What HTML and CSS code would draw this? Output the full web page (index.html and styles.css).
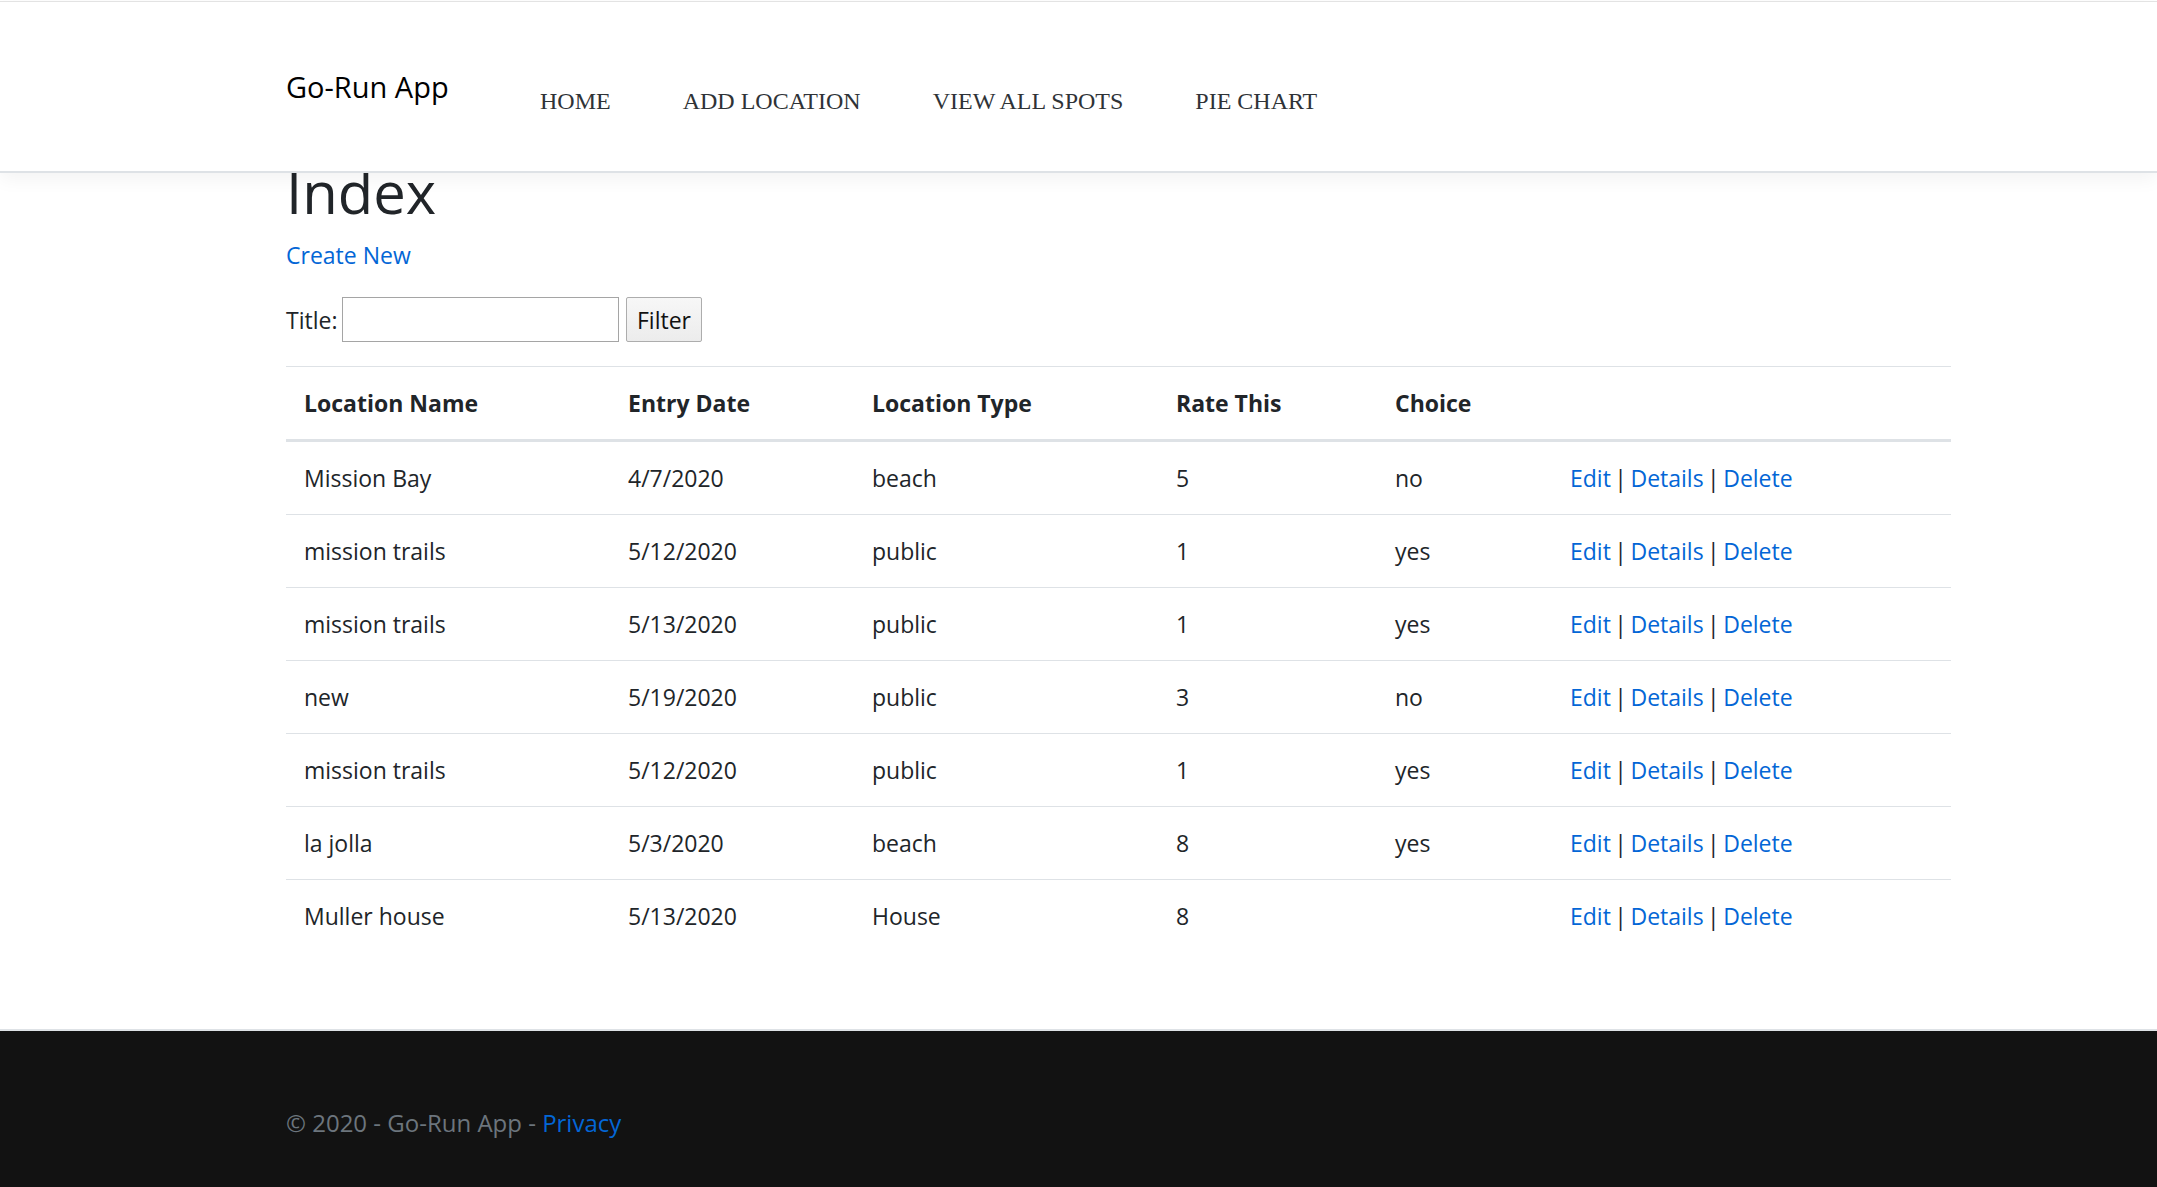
FILE: index.html
```html
<!DOCTYPE html>
<html lang="en">
<head>
<meta charset="utf-8">
<title>Index - Go-Run App</title>
<link rel="stylesheet" href="styles.css">
</head>
<body>
<header class="site-header">
  <div class="container header-inner">
    <a class="brand" href="#">Go-Run App</a>
    <nav class="nav">
      <a class="nav-link" href="#">HOME</a>
      <a class="nav-link" href="#">ADD LOCATION</a>
      <a class="nav-link" href="#">VIEW ALL SPOTS</a>
      <a class="nav-link" href="#">PIE CHART</a>
    </nav>
  </div>
</header>

<main class="container main">
  <h1 class="page-title">Index</h1>
  <p class="create"><a href="#">Create New</a></p>
  <form class="filter">
    <label class="filter-label">Title:</label>
    <input class="filter-input" type="text">
    <button class="filter-btn" type="button">Filter</button>
  </form>

  <table class="table">
    <colgroup>
      <col class="c1"><col class="c2"><col class="c3"><col class="c4"><col class="c5"><col class="c6">
    </colgroup>
    <thead>
      <tr>
        <th>Location Name</th>
        <th>Entry Date</th>
        <th>Location Type</th>
        <th>Rate This</th>
        <th>Choice</th>
        <th></th>
      </tr>
    </thead>
    <tbody>
      <tr><td>Mission Bay</td><td>4/7/2020</td><td>beach</td><td>5</td><td>no</td><td class="actions"><a href="#">Edit</a> | <a href="#">Details</a> | <a href="#">Delete</a></td></tr>
      <tr><td>mission trails</td><td>5/12/2020</td><td>public</td><td>1</td><td>yes</td><td class="actions"><a href="#">Edit</a> | <a href="#">Details</a> | <a href="#">Delete</a></td></tr>
      <tr><td>mission trails</td><td>5/13/2020</td><td>public</td><td>1</td><td>yes</td><td class="actions"><a href="#">Edit</a> | <a href="#">Details</a> | <a href="#">Delete</a></td></tr>
      <tr><td>new</td><td>5/19/2020</td><td>public</td><td>3</td><td>no</td><td class="actions"><a href="#">Edit</a> | <a href="#">Details</a> | <a href="#">Delete</a></td></tr>
      <tr><td>mission trails</td><td>5/12/2020</td><td>public</td><td>1</td><td>yes</td><td class="actions"><a href="#">Edit</a> | <a href="#">Details</a> | <a href="#">Delete</a></td></tr>
      <tr><td>la jolla</td><td>5/3/2020</td><td>beach</td><td>8</td><td>yes</td><td class="actions"><a href="#">Edit</a> | <a href="#">Details</a> | <a href="#">Delete</a></td></tr>
      <tr><td>Muller house</td><td>5/13/2020</td><td>House</td><td>8</td><td></td><td class="actions"><a href="#">Edit</a> | <a href="#">Details</a> | <a href="#">Delete</a></td></tr>
    </tbody>
  </table>
</main>

<footer class="site-footer">
  <div class="container">
    &copy; 2020 - Go-Run App - <a href="#">Privacy</a>
  </div>
</footer>
</body>
</html>
```

FILE: styles.css
```css
html, body {
  margin: 0;
  padding: 0;
  background: #fff;
}

body {
  font-family: "Open Sans", "Noto Sans", "Liberation Sans", sans-serif;
  font-size: 23px;
  line-height: 36px;
  color: #212529;
  padding-top: 1px;
}

a {
  color: #0366d6;
  text-decoration: none;
}

.container {
  width: 1665px;
  margin-left: 286px;
}

/* Header */
.site-header {
  position: relative;
  z-index: 2;
  height: 169px;
  border-top: 1px solid #e3e3e3;
  border-bottom: 2px solid #dee2e6;
  background: #fff;
  box-shadow: 0 6px 18px rgba(0, 0, 0, 0.05);
}

.header-inner {
  display: flex;
  align-items: flex-start;
}

.brand {
  display: block;
  width: 254px;
  margin-top: 70px;
  font-size: 29px;
  line-height: 30px;
  color: #000;
  white-space: nowrap;
}

.nav {
  display: flex;
  gap: 72px;
  margin-top: 87px;
}

.nav-link {
  font-family: "Liberation Serif", "Times New Roman", serif;
  font-size: 24px;
  line-height: 24px;
  color: #2f3337;
  white-space: nowrap;
}

/* Main */
.main {
  padding-bottom: 77px;
}

.page-title {
  margin: 0 0 26px;
  font-size: 58px;
  line-height: 38px;
  font-weight: 500;
  color: #212529;
}

.create {
  margin: 0 0 24px;
}

.filter {
  display: flex;
  align-items: center;
  height: 45px;
  margin: 0 0 24px;
}

.filter-label {
  width: 52px;
  margin-right: 4px;
  white-space: nowrap;
}

.filter-input {
  box-sizing: border-box;
  width: 277px;
  height: 45px;
  margin: 0;
  border: 1.5px solid #a5a5a5;
  border-radius: 0;
  background: #fff;
  font: inherit;
}

.filter-btn {
  box-sizing: border-box;
  width: 76px;
  height: 45px;
  margin: 0 0 0 7px;
  padding: 0;
  border: 1.5px solid #adadad;
  border-radius: 2px;
  background: linear-gradient(#f7f7f7, #ececec);
  font-family: inherit;
  font-size: 23px;
  color: #111;
}

/* Table */
.table {
  width: 1665px;
  border-collapse: collapse;
  table-layout: fixed;
}

.c1 { width: 324px; }
.c2 { width: 244px; }
.c3 { width: 304px; }
.c4 { width: 219px; }
.c5 { width: 175px; }
.c6 { width: 399px; }

.table th,
.table td {
  padding: 18px;
  line-height: 36px;
  text-align: left;
  vertical-align: top;
  border-top: 1px solid #dee2e6;
  white-space: nowrap;
}

.table th {
  font-weight: 700;
  border-bottom: 3px solid #dee2e6;
}

.table .actions {
  word-spacing: -2.5px;
}

/* Footer */
.site-footer {
  border-top: 2px solid #dee2e6;
  background: #121212;
  color: #6c757d;
  padding: 74px 0 46px;
  font-size: 24px;
  line-height: 36px;
  white-space: nowrap;
}
```
